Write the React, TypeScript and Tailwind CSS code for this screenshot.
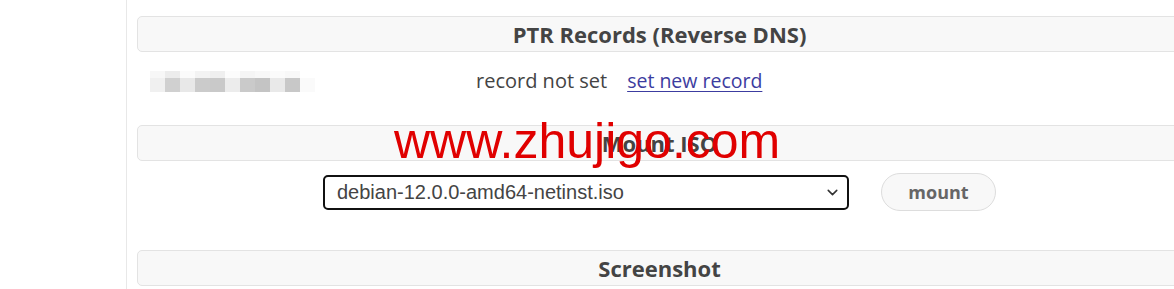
import { ChevronDown } from 'lucide-react';

const topBlocks = [
  'bg-[#f7f7f7]', 'bg-[#ececec]', 'bg-[#fbfbfb]', 'bg-[#f3f3f3]', 'bg-[#efefef]',
  'bg-[#fcfcfc]', 'bg-[#f5f5f5]', 'bg-[#f8f8f8]', 'bg-[#fbfbfb]', 'bg-[#f8f8f8]', 'bg-white',
];
const bottomBlocks = [
  'bg-[#f0f0f0]', 'bg-[#d0d0d0]', 'bg-[#e8e8e8]', 'bg-[#cbcbcb]', 'bg-[#c9c9c9]',
  'bg-[#ececec]', 'bg-[#cacaca]', 'bg-[#c4c4c4]', 'bg-[#e9e9e9]', 'bg-[#c8c8c8]', 'bg-[#fafafa]',
];

// blurred ip address, mosaic style
const BlurredIp = () => (
  <div className="flex flex-col">
    <div className="flex">
      {topBlocks.map((c, i) => (
        <div key={i} className={`h-[7px] w-[15px] ${c}`} />
      ))}
    </div>
    <div className="flex">
      {bottomBlocks.map((c, i) => (
        <div key={i} className={`h-[14px] w-[15px] ${c}`} />
      ))}
    </div>
  </div>
);

const SectionHeader = ({ title }: { title: string }) => (
  <div className="flex h-[36px] items-center justify-center rounded-[5px] border border-[#e3e3e3] bg-[#f8f8f8]">
    <h2 className="text-[22px] font-bold text-[#444]">{title}</h2>
  </div>
);

export default function App() {
  return (
    <div
      className="relative flex h-[289px] w-[1174px] overflow-hidden bg-white"
      style={{ fontFamily: '"Open Sans", "Noto Sans", sans-serif' }}
    >
      {/* Left sidebar */}
      <div className="h-full w-[127px] shrink-0 border-r border-[#e8e8e8]" />

      {/* Main content */}
      <div className="w-[1055px] shrink-0 pl-[10px] pt-[16px]">
        <SectionHeader title="PTR Records (Reverse DNS)" />

        <div className="mb-[15px] flex h-[58px] items-center">
          <div className="ml-[13px] w-[326px]">
            <BlurredIp />
          </div>
          <span className="text-[20px] text-[#444]">record not set</span>
          <a href="#" className="ml-[20px] text-[19.5px] text-[#3c3ca0] underline underline-offset-[3px]">
            set new record
          </a>
        </div>

        <SectionHeader title="Mount ISO" />

        <div className="mb-[39px] mt-[12px] flex items-center justify-center gap-[32px]">
          <div className="relative">
            <select
              className="h-[35px] w-[526px] appearance-none rounded-[5px] border-2 border-[#111] bg-white pl-[12px] text-[20px] text-[#444]"
              style={{ fontFamily: '"Liberation Sans", Arial, sans-serif' }}
              defaultValue="debian"
            >
              <option value="debian">debian-12.0.0-amd64-netinst.iso</option>
            </select>
            <ChevronDown className="pointer-events-none absolute right-[8px] top-[9px] h-[17px] w-[17px] text-[#333]" strokeWidth={2.2} />
          </div>
          <button className="h-[38px] w-[115px] rounded-full border border-[#dddddd] bg-[#f8f8f8] text-[18px] font-bold text-[#666]">
            mount
          </button>
        </div>

        <SectionHeader title="Screenshot" />
      </div>

      {/* watermark over the page */}
      <div
        className="pointer-events-none absolute left-[394px] top-[116px] text-[50px] leading-none text-[#e00000]"
        style={{ fontFamily: '"Liberation Sans", Arial, sans-serif' }}
      >
        www.zhujigo.com
      </div>
    </div>
  );
}
